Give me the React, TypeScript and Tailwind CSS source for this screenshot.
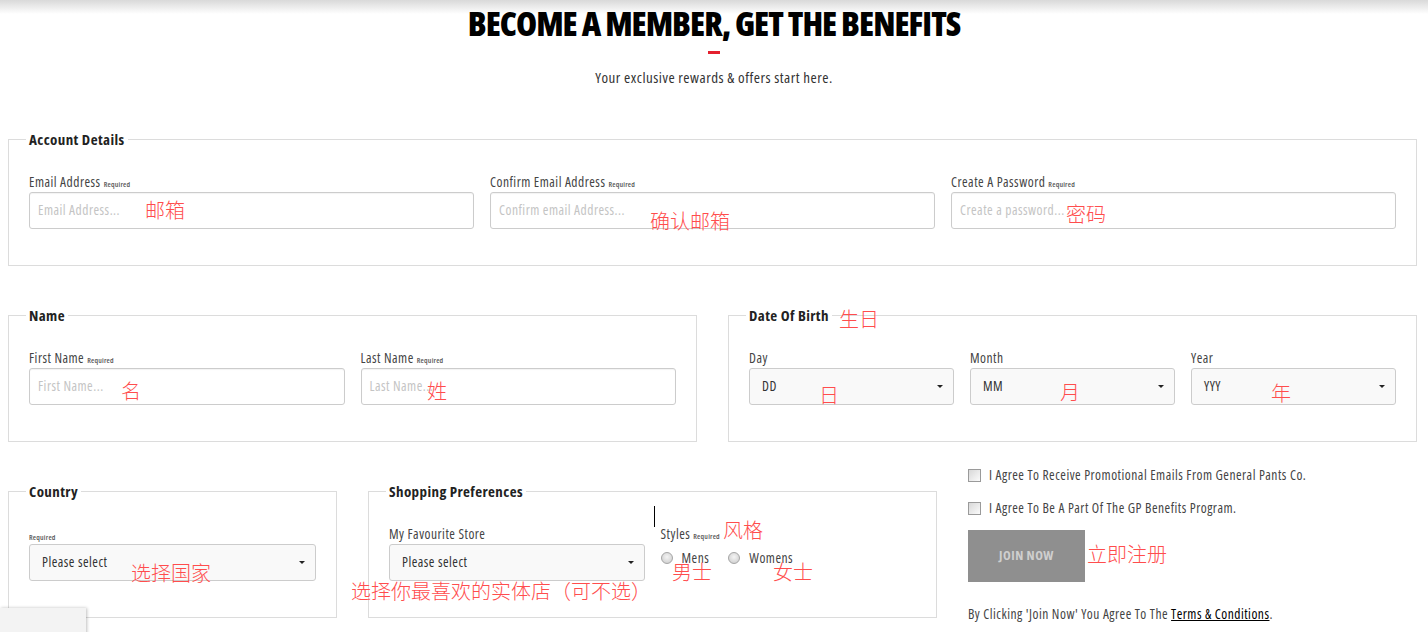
import type { ReactNode } from 'react'

const body = "font-['Open_Sans',sans-serif] [font-stretch:condensed]"
const cjk = "font-['Noto_Sans_CJK_SC',sans-serif]"

function Required() {
  return <span className="ml-[3px] text-[7.5px] tracking-[0.2px] font-semibold text-[#555]">Required</span>
}

function Fieldset({ title, children, className = '' }: { title: string; children: ReactNode; className?: string }) {
  return (
    <fieldset className={`border border-[#dcdcdc] px-[20px] pt-[26px] pb-[36px] ${className}`}>
      <legend className="-ml-[3px] px-[3px] text-[15px] leading-[18px] tracking-[0.4px] font-bold text-[#222]">{title}</legend>
      {children}
    </fieldset>
  )
}

function Label({ text, required }: { text: string; required?: boolean }) {
  return (
    <div className="h-[16px] mb-[2px] text-[13.5px] leading-[16px] tracking-[0.5px] text-[#444]">
      {text}
      {required && <Required />}
    </div>
  )
}

function TextInput({ placeholder }: { placeholder: string }) {
  return (
    <div className="h-[37px] rounded-[3px] border border-[#cccccc] bg-white pl-[8px] flex items-center text-[13.5px] tracking-[0.5px] text-[#c4c4c4] shadow-[inset_0_1px_1px_rgba(0,0,0,0.05)]">
      {placeholder}
    </div>
  )
}

function Select({ value }: { value: string }) {
  return (
    <div className="h-[37px] rounded-[3px] border border-[#cccccc] bg-[#f9f9f9] pl-[12px] pr-[10px] flex items-center justify-between text-[13.5px] tracking-[0.5px] text-[#333]">
      <span>{value}</span>
      <span className="w-0 h-0 border-l-[3px] border-r-[3px] border-t-[3px] border-l-transparent border-r-transparent border-t-[#222]" />
    </div>
  )
}

function Radio({ label }: { label: string }) {
  return (
    <div className="flex items-center gap-[9px]">
      <span className="w-[12px] h-[12px] rounded-full border border-[#a5a5a5] bg-[radial-gradient(circle_at_50%_40%,#f4f4f4,#c9c9c9)]" />
      <span className="text-[13.5px] tracking-[0.5px] text-[#444]">{label}</span>
    </div>
  )
}

function Checkbox({ label }: { label: string }) {
  return (
    <div className="flex items-center gap-[8px] h-[20px]">
      <span className="w-[13px] h-[13px] border border-[#9a9a9a] bg-gradient-to-br from-[#d8d8d8] to-[#fbfbfb]" />
      <span className="text-[13.5px] tracking-[0.5px] text-[#444]">{label}</span>
    </div>
  )
}

const notes = [
  { text: '邮箱', x: 145, y: 198 },
  { text: '确认邮箱', x: 650, y: 209 },
  { text: '密码', x: 1066, y: 202 },
  { text: '名', x: 121, y: 379 },
  { text: '姓', x: 427, y: 379 },
  { text: '生日', x: 839, y: 307 },
  { text: '日', x: 819, y: 383 },
  { text: '月', x: 1060, y: 380 },
  { text: '年', x: 1271, y: 381 },
  { text: '选择国家', x: 131, y: 561 },
  { text: '选择你最喜欢的实体店（可不选）', x: 351, y: 579 },
  { text: '风格', x: 723, y: 518 },
  { text: '男士', x: 672, y: 560 },
  { text: '女士', x: 773, y: 560 },
  { text: '立即注册', x: 1087, y: 542 },
]

export default function App() {
  return (
    <div className={`relative w-[1428px] h-[632px] overflow-hidden bg-white ${body}`}>
      {/* header shadow */}
      <div className="absolute inset-x-0 top-0 h-[14px] bg-gradient-to-b from-[#d9d9d9] to-white" />

      <div className="relative flex flex-col items-center pt-[3px]">
        <h1 className="text-[34px] leading-[40px] font-extrabold tracking-[-1px] text-black">BECOME A MEMBER, GET THE BENEFITS</h1>
        <div className="mt-[8px] w-[12px] h-[3px] bg-[#e4202e]" />
        <p className="mt-[13px] text-[15px] leading-[20px] tracking-[0.5px] text-[#333]">Your exclusive rewards &amp; offers start here.</p>
      </div>

      <div className="ml-[8px] w-[1409px] mt-[43px] flex flex-col gap-[40px]">
        <Fieldset title="Account Details">
          <div className="grid grid-cols-3 gap-[16px]">
            <div>
              <Label text="Email Address" required />
              <TextInput placeholder="Email Address..." />
            </div>
            <div>
              <Label text="Confirm Email Address" required />
              <TextInput placeholder="Confirm email Address..." />
            </div>
            <div>
              <Label text="Create A Password" required />
              <TextInput placeholder="Create a password..." />
            </div>
          </div>
        </Fieldset>

        <div className="grid grid-cols-12 gap-x-[31px]">
          <Fieldset title="Name" className="col-span-6">
            <div className="grid grid-cols-2 gap-[16px]">
              <div>
                <Label text="First Name" required />
                <TextInput placeholder="First Name..." />
              </div>
              <div>
                <Label text="Last Name" required />
                <TextInput placeholder="Last Name..." />
              </div>
            </div>
          </Fieldset>
          <Fieldset title="Date Of Birth" className="col-span-6">
            <div className="grid grid-cols-3 gap-[16px]">
              <div>
                <Label text="Day" />
                <Select value="DD" />
              </div>
              <div>
                <Label text="Month" />
                <Select value="MM" />
              </div>
              <div>
                <Label text="Year" />
                <Select value="YYY" />
              </div>
            </div>
          </Fieldset>
        </div>

        <div className="grid grid-cols-12 gap-x-[31px] items-start">
          <Fieldset title="Country" className="col-span-3">
            <div className="h-[16px] mb-[2px] flex items-end pb-[1px]">
              <span className="text-[7.5px] tracking-[0.2px] font-semibold text-[#555] leading-[8px]">Required</span>
            </div>
            <Select value="Please select" />
          </Fieldset>
          <Fieldset title="Shopping Preferences" className="col-span-5">
            <div className="grid grid-cols-2 gap-[16px]">
              <div>
                <Label text="My Favourite Store" />
                <Select value="Please select" />
              </div>
              <div className="relative">
                <span className="absolute -left-[7px] -top-[20px] w-[1px] h-[21px] bg-black" />
                <Label text="Styles" required />
                <div className="flex items-center gap-[19px] mt-[6px]">
                  <Radio label="Mens" />
                  <Radio label="Womens" />
                </div>
              </div>
            </div>
          </Fieldset>
          <div className="col-span-4 -mt-[17px] flex flex-col">
            <Checkbox label="I Agree To Receive Promotional Emails From General Pants Co." />
            <div className="mt-[13px]">
              <Checkbox label="I Agree To Be A Part Of The GP Benefits Program." />
            </div>
            <button className="mt-[12px] w-[117px] h-[52px] bg-[#8f8f8f] text-[13px] font-bold tracking-[0.5px] text-[#cfcfcf]">JOIN NOW</button>
            <p className="mt-[24px] text-[13.5px] leading-[16px] tracking-[0.5px] text-[#444]">
              By Clicking 'Join Now' You Agree To The{' '}
              <span className="text-black underline">Terms &amp; Conditions</span>.
            </p>
          </div>
        </div>
      </div>

      {/* floating widget, bottom left */}
      <div className="absolute left-0 top-[608px] w-[86px] h-[30px] bg-[#f3f3f3] shadow-[1px_0_3px_rgba(0,0,0,0.25)]" />

      {/* red annotations */}
      {notes.map((n) => (
        <span
          key={n.text + n.x}
          className={`absolute text-[20px] leading-[24px] font-light text-[#ff4d4d] whitespace-nowrap ${cjk}`}
          style={{ left: n.x, top: n.y }}
        >
          {n.text}
        </span>
      ))}
    </div>
  )
}
